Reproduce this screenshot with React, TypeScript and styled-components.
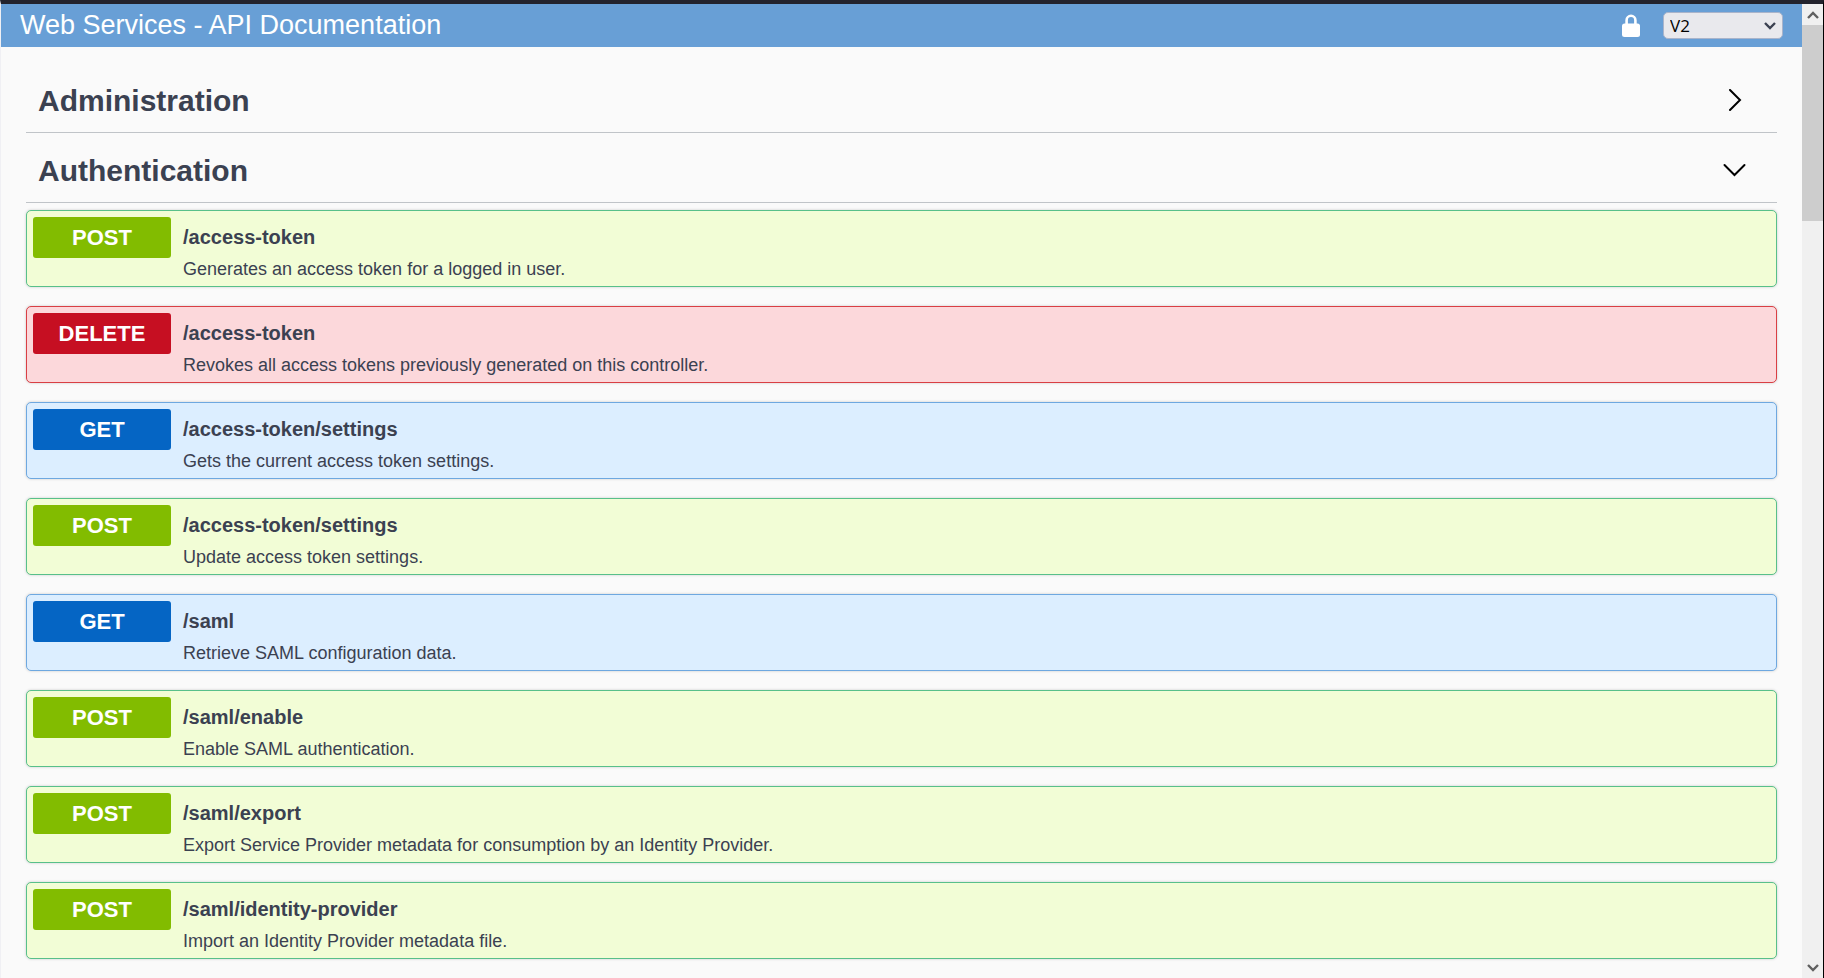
import React, { useState } from "react";
import styled, { createGlobalStyle } from "styled-components";

type Method = "POST" | "DELETE" | "GET";

interface Operation {
  method: Method;
  path: string;
  summary: string;
}

const palette: Record<Method, { badge: string; fill: string; line: string }> = {
  POST: { badge: "#82bc00", fill: "#f2fdd6", line: "#58c08a" },
  DELETE: { badge: "#c60f22", fill: "#fcd8db", line: "#d93f44" },
  GET: { badge: "#0565c4", fill: "#dceeff", line: "#6ea8e0" },
};

const operations: Operation[] = [
  { method: "POST", path: "/access-token", summary: "Generates an access token for a logged in user." },
  { method: "DELETE", path: "/access-token", summary: "Revokes all access tokens previously generated on this controller." },
  { method: "GET", path: "/access-token/settings", summary: "Gets the current access token settings." },
  { method: "POST", path: "/access-token/settings", summary: "Update access token settings." },
  { method: "GET", path: "/saml", summary: "Retrieve SAML configuration data." },
  { method: "POST", path: "/saml/enable", summary: "Enable SAML authentication." },
  { method: "POST", path: "/saml/export", summary: "Export Service Provider metadata for consumption by an Identity Provider." },
  { method: "POST", path: "/saml/identity-provider", summary: "Import an Identity Provider metadata file." },
];

const GlobalStyle = createGlobalStyle`
  *, *::before, *::after { box-sizing: border-box; }
  body {
    margin: 0;
    background: #fafafa;
    color: #3b4151;
    font-family: "Liberation Sans", Arial, sans-serif;
  }
  button, select { font-family: inherit; color: inherit; }
`;

const Window = styled.div`
  display: flex;
  height: 100vh;
  overflow: hidden;
  border-top: 4px solid #23232d;
  border-right: 1px solid #000;
  border-left: 1px solid #f0f0f4;
`;

const Page = styled.div`
  flex: 1;
  min-width: 0;
  overflow: hidden;
`;

const TopBar = styled.header`
  display: flex;
  align-items: center;
  gap: 22px;
  height: 43px;
  padding: 0 19px;
  background: #689fd6;
`;

const Title = styled.h1`
  flex: 1;
  margin: 0;
  padding-bottom: 2px;
  color: #fff;
  font-size: 27px;
  font-weight: 400;
  line-height: 40px;
`;

const IconButton = styled.button`
  display: flex;
  padding: 0;
  border: 0;
  background: none;
  color: #fff;
`;

const VersionBox = styled.div`
  display: grid;
  align-items: center;
  width: 120px;
  > * { grid-area: 1 / 1; }
  > svg {
    justify-self: end;
    margin-right: 7px;
    pointer-events: none;
  }
`;

const VersionSelect = styled.select`
  appearance: none;
  width: 100%;
  height: 27px;
  padding: 0 6px;
  border: 1px solid #a9b4cb;
  border-radius: 5px;
  background: #e9e9ed;
  color: #000;
  font-family: "Open Sans", sans-serif;
  font-size: 17px;
  line-height: 22px;
`;

const Content = styled.main`
  padding: 16px 25px 0;
`;

const TagHeading = styled.h2`
  margin: 0;
  border-bottom: 1px solid #c0c4c8;
`;

const TagButton = styled.button`
  display: flex;
  align-items: center;
  justify-content: space-between;
  width: 100%;
  height: 69px;
  padding: 6px 30px 0 12px;
  border: 0;
  background: none;
  font-size: 30px;
  font-weight: 700;
  text-align: left;
  > svg { color: #000; }
`;

const OperationList = styled.ul`
  display: grid;
  gap: 19px;
  margin: 0;
  padding: 7px 0 20px;
  list-style: none;
`;

const OperationButton = styled.button<{ $method: Method }>`
  display: flex;
  align-items: flex-start;
  gap: 12px;
  width: 100%;
  height: 77px;
  padding: 6px;
  border: 1px solid ${(p) => palette[p.$method].line};
  border-radius: 5px;
  background: ${(p) => palette[p.$method].fill};
  box-shadow: 0 0 3px rgba(0, 0, 0, 0.19);
  text-align: left;
`;

const Badge = styled.span<{ $method: Method }>`
  width: 138px;
  border-radius: 3px;
  background: ${(p) => palette[p.$method].badge};
  color: #fff;
  font-size: 22px;
  font-weight: 700;
  line-height: 41px;
  text-align: center;
`;

const Details = styled.span`
  display: grid;
  padding-top: 4px;
`;

const Path = styled.span`
  font-size: 20px;
  font-weight: 700;
  line-height: 32px;
`;

const Summary = styled.span`
  font-size: 18px;
  line-height: 32px;
`;

const ScrollRail = styled.div`
  display: flex;
  flex-direction: column;
  width: 21px;
  background: #f0f0f0;
`;

const ScrollButton = styled.button`
  display: flex;
  align-items: center;
  justify-content: center;
  height: 21px;
  padding: 0;
  border: 0;
  background: none;
  color: #606060;
`;

const ScrollTrack = styled.div`
  flex: 1;
`;

const ScrollThumb = styled.div`
  height: 21%;
  background: #cdcdcd;
`;

const LockIcon = () => (
  <svg width="20" height="24" viewBox="0 0 20 24" aria-hidden="true">
    <path d="M5.6 11V6.2a4.4 4.4 0 0 1 8.8 0V11" fill="none" stroke="currentColor" strokeWidth="2.6" />
    <rect x="1" y="9.5" width="18" height="13.5" rx="2.5" fill="currentColor" />
  </svg>
);

const TagArrow = ({ open }: { open: boolean }) => (
  <svg width="24" height="24" viewBox="0 0 24 24" fill="none" stroke="currentColor" strokeWidth="2" strokeLinecap="round" aria-hidden="true">
    <path d={open ? "M1.5 6l10 10L21.5 6" : "M7 1l10 10L7 21"} />
  </svg>
);

const SmallArrow = ({ up }: { up?: boolean }) => (
  <svg width="12" height="8" viewBox="0 0 12 8" fill="none" stroke="currentColor" strokeWidth="2.4" aria-hidden="true">
    <path d={up ? "M1 7l5-5 5 5" : "M1 1l5 5 5-5"} />
  </svg>
);

const Tag = ({ name, initiallyOpen = false, items = [] }: { name: string; initiallyOpen?: boolean; items?: Operation[] }) => {
  const [open, setOpen] = useState(initiallyOpen);
  return (
    <section>
      <TagHeading>
        <TagButton type="button" aria-expanded={open} onClick={() => setOpen(!open)}>
          {name}
          <TagArrow open={open} />
        </TagButton>
      </TagHeading>
      {open && (
        <OperationList>
          {items.map((item) => (
            <li key={item.method + item.path}>
              <OperationButton type="button" $method={item.method}>
                <Badge $method={item.method}>{item.method}</Badge>
                <Details>
                  <Path>{item.path}</Path>
                  <Summary>{item.summary}</Summary>
                </Details>
              </OperationButton>
            </li>
          ))}
        </OperationList>
      )}
    </section>
  );
};

export default function App() {
  return (
    <Window>
      <GlobalStyle />
      <Page>
        <TopBar>
          <Title>Web Services - API Documentation</Title>
          <IconButton type="button" aria-label="Authorize">
            <LockIcon />
          </IconButton>
          <VersionBox>
            <VersionSelect aria-label="API version" defaultValue="V2">
              <option>V1</option>
              <option>V2</option>
            </VersionSelect>
            <SmallArrow />
          </VersionBox>
        </TopBar>
        <Content>
          <Tag name="Administration" />
          <Tag name="Authentication" initiallyOpen items={operations} />
        </Content>
      </Page>
      <ScrollRail>
        <ScrollButton type="button" aria-label="Scroll up">
          <SmallArrow up />
        </ScrollButton>
        <ScrollTrack>
          <ScrollThumb />
        </ScrollTrack>
        <ScrollButton type="button" aria-label="Scroll down">
          <SmallArrow />
        </ScrollButton>
      </ScrollRail>
    </Window>
  );
}
